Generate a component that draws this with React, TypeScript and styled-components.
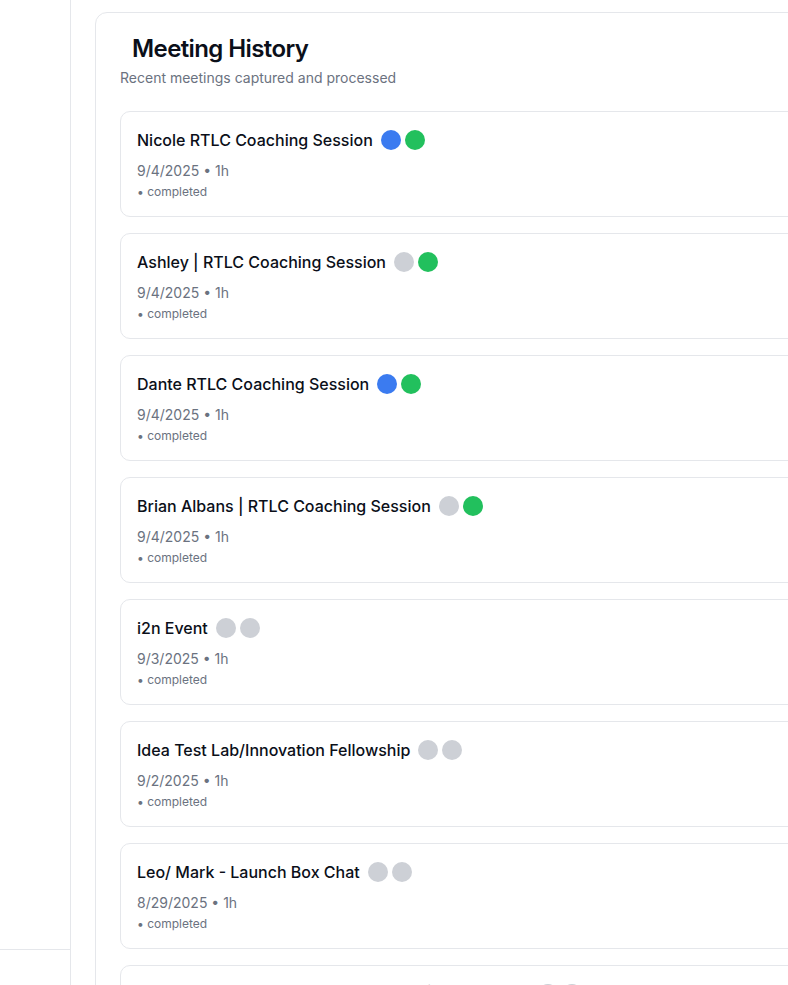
import styled, { createGlobalStyle } from "styled-components";

type Dot = "blue" | "green" | "gray";

interface Meeting {
  id: number;
  title: string;
  date: string;
  duration: string;
  status: string;
  dots: Dot[];
}

const meetings: Meeting[] = [
  { id: 1, title: "Nicole RTLC Coaching Session", date: "9/4/2025", duration: "1h", status: "completed", dots: ["blue", "green"] },
  { id: 2, title: "Ashley | RTLC Coaching Session", date: "9/4/2025", duration: "1h", status: "completed", dots: ["gray", "green"] },
  { id: 3, title: "Dante RTLC Coaching Session", date: "9/4/2025", duration: "1h", status: "completed", dots: ["blue", "green"] },
  { id: 4, title: "Brian Albans | RTLC Coaching Session", date: "9/4/2025", duration: "1h", status: "completed", dots: ["gray", "green"] },
  { id: 5, title: "i2n Event", date: "9/3/2025", duration: "1h", status: "completed", dots: ["gray", "gray"] },
  { id: 6, title: "Idea Test Lab/Innovation Fellowship", date: "9/2/2025", duration: "1h", status: "completed", dots: ["gray", "gray"] },
  { id: 7, title: "Leo/ Mark - Launch Box Chat", date: "8/29/2025", duration: "1h", status: "completed", dots: ["gray", "gray"] },
  { id: 8, title: "Quarterly Planning & Strategy Review | Team Syncs", date: "8/28/2025", duration: "1h", status: "completed", dots: ["gray", "gray"] },
];

const dotColors: Record<Dot, string> = {
  blue: "#3b7bf0",
  green: "#22c05d",
  gray: "#cdd0d6",
};

const GlobalStyle = createGlobalStyle`
  html, body {
    margin: 0;
    padding: 0;
    background: #fff;
    overflow: hidden;
  }
  body {
    font-family: Inter, "Liberation Sans", sans-serif;
    color: #0b0f19;
  }
  * {
    box-sizing: border-box;
  }
`;

const App = () => {
  return (
    <>
      <GlobalStyle />
      <Layout>
        <Sidebar>
          <SidebarBody />
          <SidebarFooter />
        </Sidebar>
        <Main>
          <HistoryPanel>
            <PanelTitle>Meeting History</PanelTitle>
            <PanelSubtitle>Recent meetings captured and processed</PanelSubtitle>
            <MeetingList>
              {meetings.map((m) => (
                <MeetingCard key={m.id}>
                  <TitleRow>
                    <MeetingTitle>{m.title}</MeetingTitle>
                    <Dots>
                      {m.dots.map((d, i) => (
                        <StatusDot key={i} $color={dotColors[d]} />
                      ))}
                    </Dots>
                  </TitleRow>
                  <MetaLine>
                    {m.date} • {m.duration}
                  </MetaLine>
                  <StatusLine>• {m.status}</StatusLine>
                </MeetingCard>
              ))}
            </MeetingList>
          </HistoryPanel>
        </Main>
      </Layout>
    </>
  );
};

export default App;

const Layout = styled.div`
  display: flex;
  height: 100vh;
  width: 100vw;
  overflow: hidden;
`;

const Sidebar = styled.aside`
  width: 71px;
  flex-shrink: 0;
  height: 100vh;
  border-right: 1px solid #e5e7eb;
  display: flex;
  flex-direction: column;
`;

const SidebarBody = styled.div`
  flex: 1;
`;

const SidebarFooter = styled.div`
  height: 36px;
  border-top: 1px solid #e5e7eb;
`;

const Main = styled.main`
  flex-shrink: 0;
  padding: 12px 0 0 24px;
`;

const HistoryPanel = styled.section`
  width: 940px;
  border: 1px solid #e5e7eb;
  border-radius: 12px;
  padding: 18px 24px 24px;
  background: #fff;
`;

const PanelTitle = styled.h2`
  margin: 0;
  padding-left: 12px;
  font-size: 24px;
  line-height: 36px;
  font-weight: 600;
  letter-spacing: -0.6px;
  color: #0b0f19;
`;

const PanelSubtitle = styled.p`
  margin: 1px 0 0;
  font-size: 14px;
  line-height: 20px;
  color: #6b7280;
`;

const MeetingList = styled.div`
  margin-top: 23px;
  display: flex;
  flex-direction: column;
  gap: 16px;
`;

const MeetingCard = styled.div`
  border: 1px solid #e5e7eb;
  border-radius: 10px;
  padding: 16px;
  height: 106px;
`;

const TitleRow = styled.div`
  display: flex;
  align-items: center;
  gap: 8px;
  height: 24px;
`;

const MeetingTitle = styled.span`
  font-size: 16px;
  line-height: 24px;
  font-weight: 500;
  color: #0b0f19;
  white-space: nowrap;
`;

const Dots = styled.div`
  display: flex;
  gap: 4px;
`;

const StatusDot = styled.span<{ $color: string }>`
  width: 20px;
  height: 20px;
  border-radius: 50%;
  background: ${({ $color }) => $color};
`;

const MetaLine = styled.div`
  margin-top: 9px;
  font-size: 14px;
  line-height: 20px;
  color: #6b7280;
`;

const StatusLine = styled.div`
  margin-top: 3px;
  font-size: 12px;
  line-height: 16px;
  color: #6b7280;
`;
